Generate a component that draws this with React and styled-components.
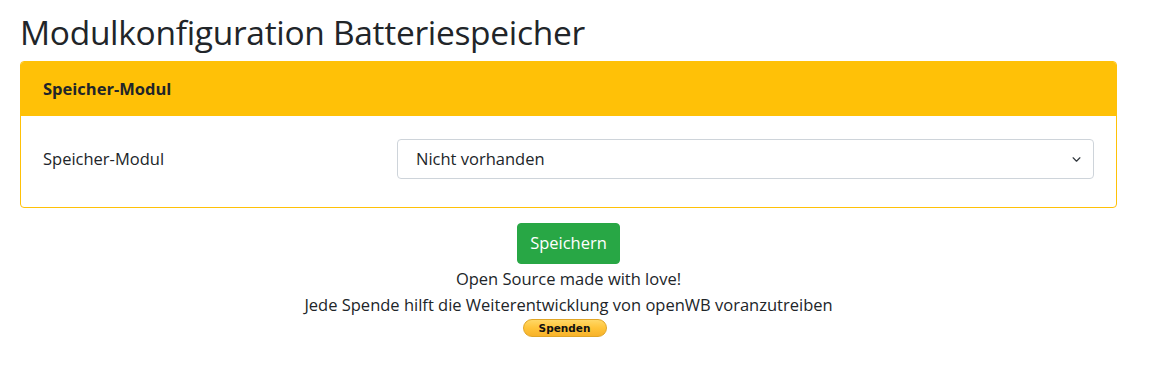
import styled, { createGlobalStyle } from 'styled-components';

const GlobalStyle = createGlobalStyle`
    html, body {
        margin: 0;
        padding: 0;
        background: #fff;
    }
    body {
        font-family: "Open Sans", "Noto Sans", sans-serif;
        font-size: 17.6px;
        line-height: 1.5;
        color: #212529;
    }
`

const Page = styled.div`
    width: 1097px;
    padding: 0 0 0 20px;
`

const Title = styled.h1`
    font-size: 33.5px;
    font-weight: 400;
    line-height: 40px;
    margin: 12px 0 9px;
    letter-spacing: -0.3px;
`

const Card = styled.div`
    border: 1px solid #ffc107;
    border-radius: 4px;
    overflow: hidden;
`

const CardHeader = styled.div`
    background-color: #ffc107;
    padding: 14px 22px 14px;
    font-weight: 700;
    font-size: 16.5px;
    line-height: 26px;
`

const CardBody = styled.div`
    padding: 23px 22px 28px;
`

const FormRow = styled.div`
    display: flex;
    align-items: center;
`

const Label = styled.label`
    flex: 0 0 354px;
    font-size: 16.5px;
`

const SelectBox = styled.div`
    flex: 1;
    position: relative;
    height: 40px;
    border: 1px solid #ced4da;
    border-radius: 4px;
    display: flex;
    align-items: center;
    padding: 0 18px;
    font-size: 16.5px;
    box-sizing: border-box;

    svg {
        position: absolute;
        right: 11px;
        top: 15px;
    }
`

const Footer = styled.div`
    display: flex;
    flex-direction: column;
    align-items: center;
    padding-top: 15px;
    font-size: 16.5px;
    line-height: 26px;
`

const SaveButton = styled.button`
    background-color: #28a745;
    border: 1px solid #28a745;
    color: #fff;
    border-radius: 4px;
    font-family: inherit;
    font-size: 16.5px;
    height: 41px;
    padding: 0 12px;
    line-height: 1;
    margin-bottom: 2px;
`

const DonateButton = styled.button`
    margin-top: 1px;
    margin-left: -8px;
    width: 84px;
    height: 18px;
    border-radius: 9px;
    border: 1px solid #e0a526;
    background: linear-gradient(#ffd866, #ffc439 50%, #f7b22a);
    font-family: "DejaVu Sans", Verdana, sans-serif;
    font-weight: 700;
    font-size: 10.5px;
    color: #111;
    padding: 0;
    line-height: 16px;
`

export default function App() {
    return (
        <>
            <GlobalStyle />
            <Page>
                <Title>Modulkonfiguration Batteriespeicher</Title>
                <Card>
                    <CardHeader>Speicher-Modul</CardHeader>
                    <CardBody>
                        <FormRow>
                            <Label>Speicher-Modul</Label>
                            <SelectBox>
                                Nicht vorhanden
                                <svg width="11" height="9" viewBox="0 0 16 16">
                                    <path d="M2 5l6 6 6-6" fill="none" stroke="#343a40" strokeWidth="2.2" strokeLinecap="round" strokeLinejoin="round" />
                                </svg>
                            </SelectBox>
                        </FormRow>
                    </CardBody>
                </Card>
                <Footer>
                    <SaveButton>Speichern</SaveButton>
                    <div>Open Source made with love!</div>
                    <div>Jede Spende hilft die Weiterentwicklung von openWB voranzutreiben</div>
                    <DonateButton>Spenden</DonateButton>
                </Footer>
            </Page>
        </>
    )
}
